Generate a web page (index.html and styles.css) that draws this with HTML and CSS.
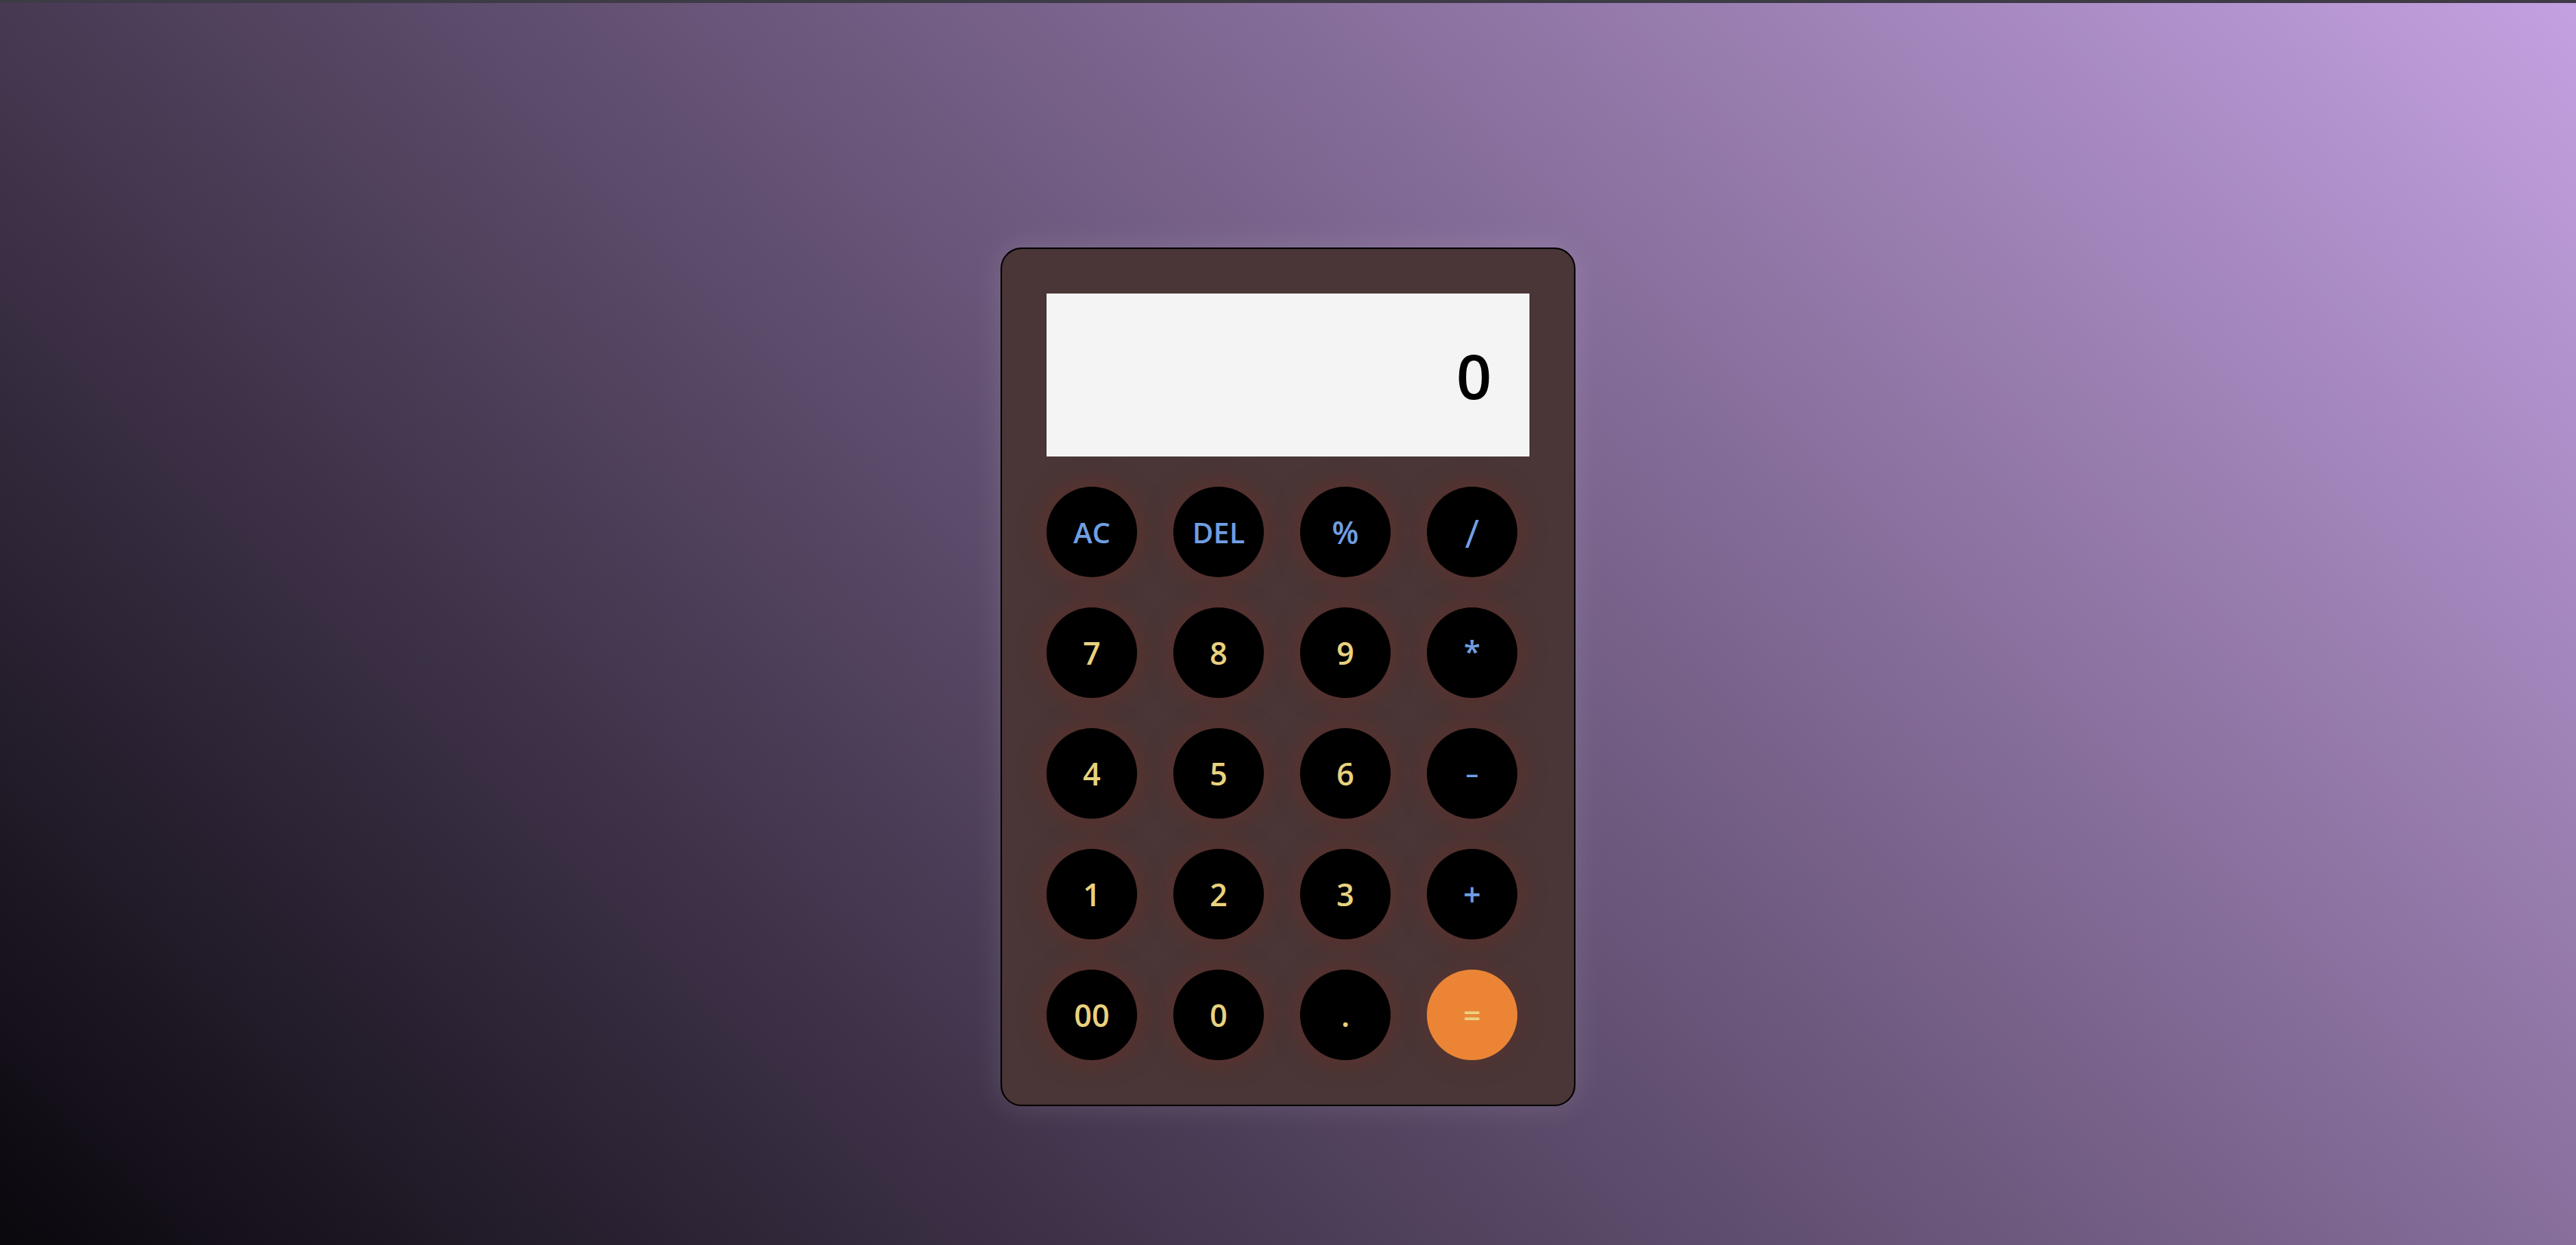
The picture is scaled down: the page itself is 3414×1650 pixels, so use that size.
FILE: index.html
```html
<!DOCTYPE html>
<html lang="en">
<head>
<meta charset="utf-8">
<title>Calculator</title>
<link rel="stylesheet" href="styles.css">
</head>
<body>
<div class="topbar"></div>
<main class="page">
  <div class="calculator">
    <div class="display"><span class="value">0</span></div>
    <div class="keys">
      <button class="key op word">AC</button>
      <button class="key op word">DEL</button>
      <button class="key op">%</button>
      <button class="key op slash">/</button>
      <button class="key num">7</button>
      <button class="key num">8</button>
      <button class="key num">9</button>
      <button class="key op star">*</button>
      <button class="key num">4</button>
      <button class="key num">5</button>
      <button class="key num">6</button>
      <button class="key op minus">–</button>
      <button class="key num">1</button>
      <button class="key num">2</button>
      <button class="key num">3</button>
      <button class="key op">+</button>
      <button class="key num">00</button>
      <button class="key num">0</button>
      <button class="key num">.</button>
      <button class="key equal">=</button>
    </div>
  </div>
</main>
</body>
</html>
```
FILE: styles.css
```css
* { box-sizing: border-box; }
html, body { margin: 0; padding: 0; }
body {
  min-height: 100vh;
  background: linear-gradient(45deg, #0a070d 0%, #c4a1e1 100%);
  font-family: "Open Sans", "DejaVu Sans", sans-serif;
}
.topbar {
  height: 4px;
  background: #3d3b45;
}
.page {
  display: flex;
  justify-content: center;
  padding-top: 324px;
}
.calculator {
  width: 762px;
  padding: 59px;
  background: #4a3636;
  border: 2px solid #000;
  border-radius: 28px;
  box-shadow: 0 0 40px rgba(255, 255, 255, 0.12);
}
.display {
  height: 216px;
  background: #f4f4f4;
  display: flex;
  align-items: center;
  justify-content: flex-end;
  padding-right: 50px;
}
.value {
  font-size: 82px;
  color: #000;
  line-height: 1;
  font-weight: 600;
}
.keys {
  margin-top: 40px;
  display: grid;
  grid-template-columns: repeat(4, 120px);
  column-gap: 48px;
  row-gap: 40px;
}
.key {
  width: 120px;
  height: 120px;
  border-radius: 50%;
  border: none;
  background: #000;
  font-family: inherit;
  font-size: 41px;
  font-weight: 600;
  display: flex;
  align-items: center;
  justify-content: center;
  padding: 0;
  box-shadow: 0 0 34px rgba(115, 42, 32, 0.6);
}
.num { color: #e9d27f; }
.op { color: #6f9ee2; }
.word { font-size: 38px; }
.slash { font-size: 52px; font-weight: 400; }
.star { font-size: 40px; align-items: flex-start; padding-top: 30px; }
.minus { font-size: 34px; }
.equal {
  background: #eb8535;
  color: #e9d27f;
  box-shadow: 0 0 34px rgba(115, 42, 32, 0.35);
}
```
